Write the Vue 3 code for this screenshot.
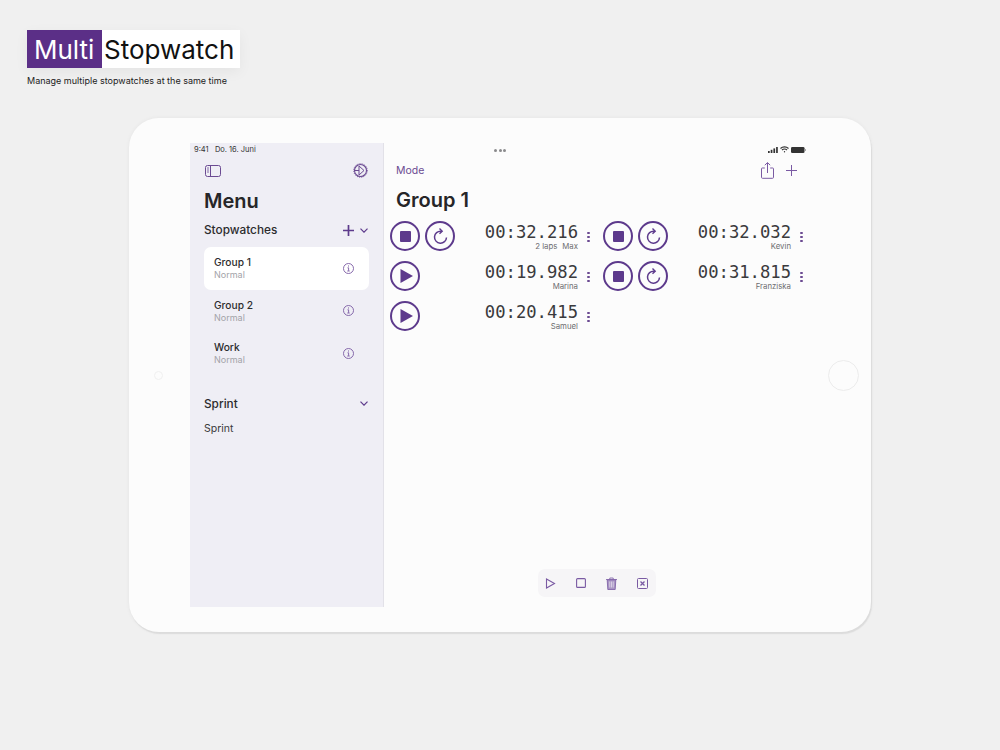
<script setup>
const groups = [
  { name: 'Group 1', active: true },
  { name: 'Group 2', active: false },
  { name: 'Work', active: false },
]

const watches = [
  { time: '00:32.216', name: 'Max', laps: '2 laps', running: true },
  { time: '00:32.032', name: 'Kevin', running: true },
  { time: '00:19.982', name: 'Marina', running: false },
  { time: '00:31.815', name: 'Franziska', running: true },
  { time: '00:20.415', name: 'Samuel', running: false },
]
</script>

<template>
  <div class="page">
    <header class="brand">
      <h1 class="logo"><span class="logo-a">Multi</span><span class="logo-b">Stopwatch</span></h1>
      <p class="tagline">Manage multiple stopwatches at the same time</p>
    </header>

    <div class="device">
      <div class="bezel"><span class="camera"></span></div>

      <div class="screen">
        <aside class="sidebar">
          <div class="status-left">9:41&nbsp;&nbsp;&nbsp;Do. 16. Juni</div>
          <div class="side-tools">
            <svg width="16" height="12" viewBox="0 0 16 12" fill="none" stroke="#6b4a92" stroke-width="1">
              <rect x="0.5" y="0.5" width="15" height="11" rx="2" />
              <path d="M5.5 .5v11" />
              <path d="M2 3h2M2 5h2M2 7h2" stroke-width=".8" />
            </svg>
            <svg width="15" height="15" viewBox="0 0 15 15" fill="none" stroke="#6b4a92">
              <circle cx="7.5" cy="7.5" r="6" stroke-width="1.1" />
              <circle cx="7.5" cy="7.5" r="6.8" stroke-width="1" stroke-dasharray="1 1.2" />
              <path d="M6 3l0 9 5-4.500z" stroke-width="1" />
              <path d="M1.500 7.500H6" stroke-width="1" />
            </svg>
          </div>
          <h2 class="menu-title">Menu</h2>

          <div class="section-head stop-head">
            <span>Stopwatches</span>
            <span class="section-tools">
              <svg width="11" height="11" viewBox="0 0 11 11" stroke="#5d3a8c" stroke-width="1.7"><path d="M5.500 0v11M0 5.500h11" /></svg>
              <svg class="chev" width="8" height="5" viewBox="0 0 8 5" fill="none" stroke="#5d3a8c" stroke-width="1.2"><path d="M.5 .7L4 4.200 7.500 .7" /></svg>
            </span>
          </div>

          <ul class="groups">
            <li v-for="g in groups" :key="g.name" class="group" :class="{ active: g.active }">
              <div>
                <div class="group-name">{{ g.name }}</div>
                <div class="group-mode">Normal</div>
              </div>
              <svg width="11" height="11" viewBox="0 0 11 11" fill="none" stroke="#7a5aa3" stroke-width=".9">
                <circle cx="5.500" cy="5.500" r="5" />
                <path d="M4.500 4.800h1.100v3M4.300 8h2.400" />
                <path d="M5.500 2.500v1" stroke-width="1.100" />
              </svg>
            </li>
          </ul>

          <div class="section-head sprint-head">
            <span>Sprint</span>
            <svg class="chev" width="8" height="5" viewBox="0 0 8 5" fill="none" stroke="#5d3a8c" stroke-width="1.2"><path d="M.5 .7L4 4.200 7.500 .7" /></svg>
          </div>
          <div class="sprint-item">Sprint</div>
        </aside>

        <main class="content">
          <div class="status-bar">
            <span class="dots"><i></i><i></i><i></i></span>
            <span class="status-right">
              <svg width="10" height="6" viewBox="0 0 10 6" fill="#333"><rect x="0" y="4" width="1.700" height="2" /><rect x="2.700" y="2.800" width="1.700" height="3.200" /><rect x="5.400" y="1.400" width="1.700" height="4.600" /><rect x="8.100" y="0" width="1.700" height="6" /></svg>
              <svg width="9" height="7" viewBox="0 0 9 7" fill="none" stroke="#333" stroke-width="1.100"><path d="M.5 2.500a5.700 5.700 0 0 1 8 0M2 4a3.500 3.500 0 0 1 5 0" /><circle cx="4.500" cy="5.700" r=".7" fill="#333" stroke="none" /></svg>
              <svg width="15" height="6" viewBox="0 0 15 6" fill="#333"><rect x="0" y="0" width="13.500" height="6" rx="1.300" /><rect x="14" y="2" width="1" height="2" fill="#aaa" /></svg>
            </span>
          </div>

          <div class="nav-row">
            <span class="mode">Mode</span>
            <span class="nav-tools">
              <svg width="13" height="17" viewBox="0 0 13 17" fill="none" stroke="#7a5aa3" stroke-width="1">
                <path d="M3.800 6H1.200a.7.700 0 0 0-.7.700v8.600a1 1 0 0 0 1 1h10a1 1 0 0 0 1-1V6.700a.7.700 0 0 0-.7-.7H9.200" />
                <path d="M6.500 11V.8M3.800 3.200L6.500 .6l2.700 2.600" />
              </svg>
              <svg width="11" height="11" viewBox="0 0 11 11" stroke="#7a5aa3" stroke-width="1"><path d="M5.500 0v11M0 5.500h11" /></svg>
            </span>
          </div>

          <h2 class="group-title">Group 1</h2>

          <div class="watches">
            <div v-for="w in watches" :key="w.name" class="watch">
              <div class="buttons">
                <button class="round">
                  <span v-if="w.running" class="stop-square"></span>
                  <svg v-else class="play" width="13" height="14" viewBox="0 0 13 14" fill="#5d3a8c"><path d="M.5 0L13 7 .5 14z" /></svg>
                </button>
                <button v-if="w.running" class="round">
                  <svg width="15" height="17" viewBox="0 0 15 17" fill="none" stroke="#5d3a8c" stroke-width="1.500">
                    <path d="M8 3.200A6 6 0 1 0 13.500 9.500" />
                    <path d="M6.500 .6l2.700 2.600-2.700 2.600" stroke-width="1.400" />
                  </svg>
                </button>
              </div>
              <div class="reading">
                <div class="time">{{ w.time }}</div>
                <div class="caption"><span v-if="w.laps" class="laps">{{ w.laps }}</span>{{ w.name }}</div>
              </div>
              <span class="more"><i></i><i></i><i></i></span>
            </div>
          </div>

          <div class="toolbar-wrap">
            <div class="toolbar">
              <svg width="11" height="11" viewBox="0 0 11 11" fill="none" stroke="#7a5aa3" stroke-width="1.100"><path d="M1.500 1l8 4.500-8 4.500z" /></svg>
              <svg width="10" height="10" viewBox="0 0 10 10" fill="none" stroke="#7a5aa3" stroke-width="1.100"><rect x=".6" y=".6" width="8.800" height="8.800" rx="1" /></svg>
              <svg width="11" height="13" viewBox="0 0 11 13" fill="#a995c4" stroke="#7a5aa3" stroke-width=".8"><path d="M0 2.500h11M3.800 2.500V1h3.400v1.500" fill="none" /><path d="M1.200 2.800h8.600l-.6 9.700H1.800z" /><path d="M3.800 4.500v6M5.500 4.500v6M7.200 4.500v6" stroke="#f6f5f7" stroke-width=".6" /></svg>
              <svg width="11" height="11" viewBox="0 0 11 11" fill="none" stroke="#7a5aa3" stroke-width="1"><rect x=".5" y=".5" width="10" height="10" rx="1" /><path d="M3.500 3.500l4 4M7.500 3.500l-4 4" stroke-width="1.300" /></svg>
            </div>
          </div>
        </main>
      </div>

      <div class="bezel"><span class="home"></span></div>
    </div>
  </div>
</template>

<style scoped>
.page {
  width: 1000px;
  height: 750px;
  box-sizing: border-box;
  padding: 30px 0 0 27px;
  background: #f0f0f0;
  font-family: Inter, "Liberation Sans", sans-serif;
  overflow: hidden;
}

.brand {
  height: 88px;
}

.logo {
  display: inline-flex;
  margin: 0;
  height: 38px;
  font-size: 26px;
  font-weight: 400;
  line-height: 39px;
  background: #fff;
  box-shadow: 0 4px 14px rgba(0, 0, 0, 0.05);
}

.logo-a {
  width: 75px;
  box-sizing: border-box;
  padding-left: 7px;
  color: #fff;
  background: #5b2f87;
}

.logo-b {
  width: 138px;
  box-sizing: border-box;
  padding-left: 2px;
  color: #111;
}

.tagline {
  margin: 6px 0 0;
  font-size: 9px;
  line-height: 14px;
  color: #222;
}

.device {
  display: flex;
  width: 742px;
  height: 514px;
  margin-left: 102px;
  box-sizing: border-box;
  border-radius: 30px;
  background: #fcfcfc;
  box-shadow: 1px 2px 1px #dcdcdc, 0 0 4px rgba(0, 0, 0, 0.05);
}

.bezel {
  width: 61px;
  flex: none;
  display: flex;
  align-items: center;
  justify-content: center;
}

.camera {
  width: 9px;
  height: 9px;
  margin-left: -2px;
  box-sizing: border-box;
  border-radius: 50%;
  border: 1px solid #f0f0f0;
}

.home {
  width: 31px;
  height: 31px;
  margin-left: 6px;
  box-sizing: border-box;
  border-radius: 50%;
  border: 1.500px solid #ececec;
}

.screen {
  flex: 1;
  min-width: 0;
  display: flex;
  height: 464px;
  margin-top: 25px;
}

.sidebar {
  width: 194px;
  flex: none;
  box-sizing: border-box;
  padding: 0 14px 0 14px;
  background: #efeef5;
  border-right: 1px solid #e2e1e8;
  color: #2b2b2d;
}

.status-left {
  margin-left: -10px;
  padding-top: 2px;
  font-size: 7.500px;
  line-height: 9px;
  color: #333;
}

.side-tools {
  display: flex;
  align-items: center;
  justify-content: space-between;
  height: 15px;
  margin: 9px 1px 0 1px;
}

.menu-title {
  margin: 11px 0 0;
  font-size: 20px;
  font-weight: 600;
  line-height: 24px;
  color: #262628;
}

.section-head {
  display: flex;
  align-items: center;
  justify-content: space-between;
  font-size: 11.800px;
  font-weight: 500;
  line-height: 16px;
}

.stop-head {
  margin-top: 9px;
}

.section-tools {
  display: flex;
  align-items: center;
  gap: 6px;
}

.chev {
  margin-right: 1px;
}

.groups {
  margin: 9px 0 0;
  padding: 0;
  list-style: none;
}

.group {
  display: flex;
  align-items: center;
  justify-content: space-between;
  height: 42.500px;
  box-sizing: border-box;
  padding: 0 15px 0 10px;
  border-radius: 7px;
}

.group.active {
  background: #fff;
}

.group-name {
  font-size: 10.200px;
  font-weight: 500;
  line-height: 13px;
}

.group-mode {
  font-size: 9px;
  line-height: 11px;
  color: #a3a3a8;
}

.sprint-head {
  margin-top: 21px;
}

.sprint-item {
  margin-top: 10px;
  font-size: 10.500px;
  line-height: 13px;
  color: #3a3a3c;
}

.content {
  flex: 1;
  display: flex;
  flex-direction: column;
  min-width: 0;
}

.status-bar {
  display: flex;
  align-items: center;
  height: 14px;
  padding: 0 4px 0 110px;
  justify-content: space-between;
}

.dots {
  display: flex;
  gap: 1.500px;
  margin-top: 1px;
}

.dots i {
  width: 3px;
  height: 3px;
  border-radius: 50%;
  background: #8a8a8c;
}

.status-right {
  display: flex;
  align-items: center;
  gap: 2px;
  margin-top: -1px;
}

.nav-row {
  display: flex;
  align-items: center;
  justify-content: space-between;
  height: 20px;
  margin-top: 3px;
  padding: 0 13px 0 12px;
}

.mode {
  font-size: 10.500px;
  color: #6b4a92;
}

.nav-tools {
  display: flex;
  align-items: center;
  gap: 12px;
}

.group-title {
  margin: 7px 0 0 12px;
  font-size: 20px;
  font-weight: 600;
  line-height: 26px;
  color: #262628;
}

.watches {
  display: grid;
  grid-template-columns: 213px 213px;
  grid-auto-rows: 40px;
  margin: 4px 0 0 6px;
  flex: 1;
  align-content: start;
}

.watch {
  display: flex;
  align-items: center;
}

.buttons {
  display: flex;
  gap: 5px;
  width: 65px;
  flex: none;
  margin-top: -2px;
}

.round {
  display: flex;
  align-items: center;
  justify-content: center;
  width: 30px;
  height: 30px;
  padding: 0;
  box-sizing: border-box;
  border: 2px solid #5d3a8c;
  border-radius: 50%;
  background: transparent;
}

.play {
  margin-left: 2px;
}

.stop-square {
  width: 11px;
  height: 11px;
  border-radius: 1px;
  background: #5d3a8c;
}

.reading {
  flex: 1;
  text-align: right;
}

.time {
  font-family: "DejaVu Sans Mono", "Liberation Mono", monospace;
  font-size: 17.200px;
  line-height: 19px;
  color: #3a3a3c;
}

.caption {
  font-size: 7.800px;
  line-height: 9px;
  color: #6d6d70;
}

.laps {
  margin-right: 5px;
}

.more {
  display: flex;
  flex-direction: column;
  gap: 1.500px;
  width: 3px;
  margin: 0 13px 0 9px;
}

.more i {
  width: 2.500px;
  height: 2.500px;
  border-radius: 50%;
  background: #6b4a92;
}

.toolbar-wrap {
  display: flex;
  justify-content: center;
  padding: 0 0 10px 0;
}

.toolbar {
  display: flex;
  align-items: center;
  justify-content: space-between;
  width: 118px;
  height: 28px;
  box-sizing: border-box;
  padding: 0 8px 0 7px;
  border-radius: 7px;
  background: #f6f5f7;
}
</style>
